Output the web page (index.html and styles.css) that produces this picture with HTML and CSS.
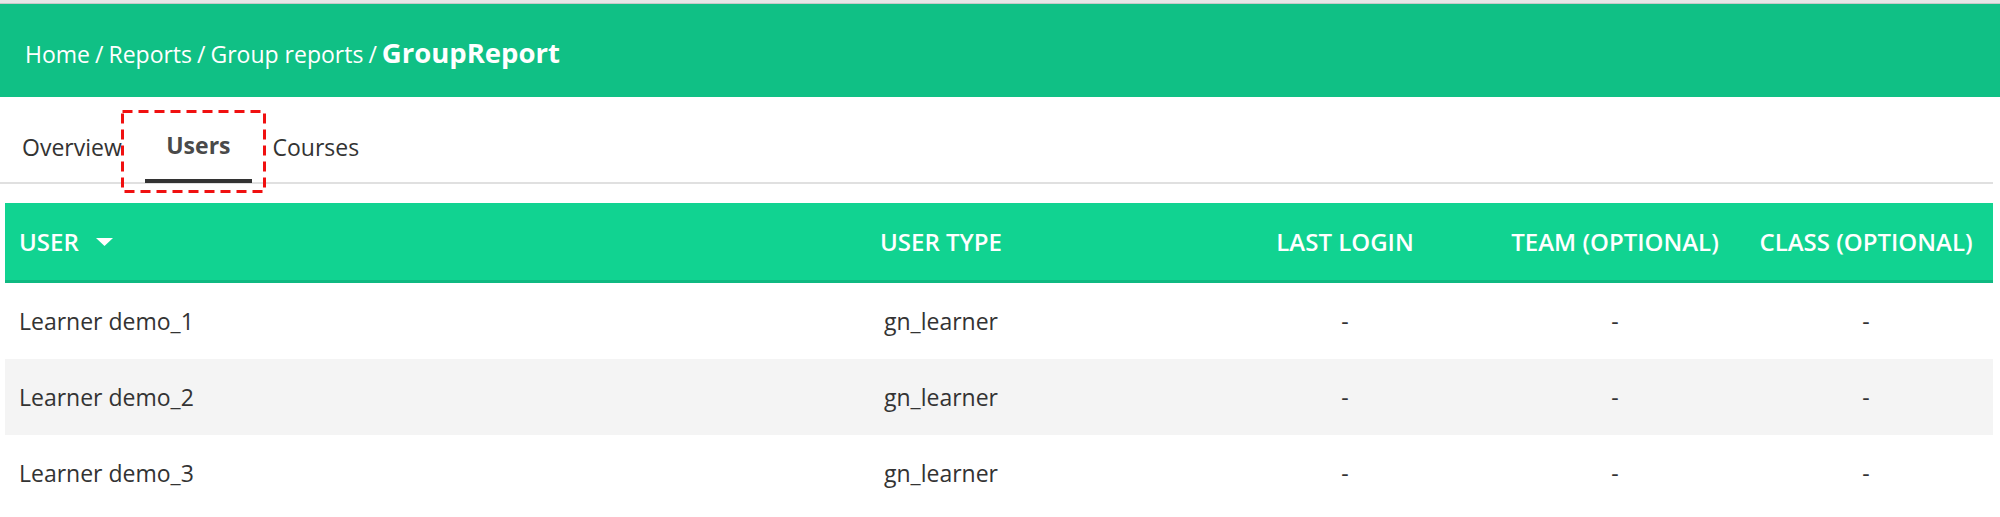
FILE: index.html
```html
<!DOCTYPE html>
<html lang="en">
<head>
<meta charset="utf-8">
<title>GroupReport</title>
<link rel="stylesheet" href="styles.css">
</head>
<body>
<div class="topstrip"></div>
<header class="pagehead">
  <nav class="crumbs">
    <span class="crumb">Home</span><span class="sep">/</span><span class="crumb">Reports</span><span class="sep">/</span><span class="crumb">Group reports</span><span class="sep">/</span><span class="crumb current">GroupReport</span>
  </nav>
</header>
<main class="content">
  <div class="tabs">
    <div class="tab tab-first">Overview</div>
    <div class="tab active">Users
      <svg class="annot" width="145" height="83" viewBox="0 0 145 83"><rect x="1.5" y="1.5" width="142" height="80" fill="none" stroke="#f01010" stroke-width="3" stroke-dasharray="10 6"/></svg>
    </div>
    <div class="tab">Courses</div>
  </div>
  <div class="table">
    <div class="row head">
      <div class="cell first">USER <svg class="caret" width="17" height="8" viewBox="0 0 17 8"><polygon points="0,0 17,0 8.5,8" fill="#fff"/></svg></div>
      <div class="cell">USER TYPE</div>
      <div class="cell">LAST LOGIN</div>
      <div class="cell">TEAM (OPTIONAL)</div>
      <div class="cell">CLASS (OPTIONAL)</div>
    </div>
    <div class="row">
      <div class="cell first">Learner demo_1</div>
      <div class="cell">gn_learner</div>
      <div class="cell">-</div>
      <div class="cell">-</div>
      <div class="cell">-</div>
    </div>
    <div class="row alt">
      <div class="cell first">Learner demo_2</div>
      <div class="cell">gn_learner</div>
      <div class="cell">-</div>
      <div class="cell">-</div>
      <div class="cell">-</div>
    </div>
    <div class="row">
      <div class="cell first">Learner demo_3</div>
      <div class="cell">gn_learner</div>
      <div class="cell">-</div>
      <div class="cell">-</div>
      <div class="cell">-</div>
    </div>
  </div>
</main>
</body>
</html>
```
FILE: styles.css
```css
* { box-sizing: border-box; }
html, body { margin: 0; padding: 0; background: #fff; }
body { font-family: "Open Sans", "Liberation Sans", sans-serif; color: #333; font-size: 23px; }

.topstrip { height: 4px; background: #e6e6e6; border-bottom: 1px solid #c9c9c9; }

.pagehead {
  height: 93px;
  background: #10c085;
  display: flex;
  align-items: center;
  padding: 3px 0 0 25px;
}
.crumbs { color: #fff; display: flex; align-items: baseline; font-size: 23px; }
.sep { margin: 0 5px; }
.crumb.current { font-weight: 700; font-size: 27.5px; }

.content { width: 1993px; }

.tabs {
  display: flex;
  border-bottom: 2px solid #e0e0e0;
  height: 87px;
}
.tab {
  position: relative;
  padding: 35px 21px 16px;
  border-bottom: 4px solid transparent;
  margin-bottom: -1px;
  color: #333;
  line-height: 30px;
  white-space: nowrap;
}
.tab-first { padding-left: 22px; padding-right: 23.5px; }
.tab.active { font-weight: 700; color: #4a4a4a; border-bottom-color: #333; padding-top: 33px; padding-bottom: 18px; }
.annot { position: absolute; left: -24px; top: 13px; }

.table { margin: 19px 0 0 5px; width: 1988px; }
.row {
  display: grid;
  grid-template-columns: 678px 516px 292px 248px 254px;
  height: 76px;
  align-items: center;
}
.row.alt { background: #f4f4f4; }
.row.head {
  height: 80px;
  background: #11d391;
  border-bottom: 3px solid #0fb981;
  color: #fff;
  font-weight: 600;
  font-size: 24px;
}
.cell { text-align: center; white-space: nowrap; }
.cell.first { text-align: left; padding-left: 14px; display: flex; align-items: center; }
.caret { margin-left: 17px; }
```
